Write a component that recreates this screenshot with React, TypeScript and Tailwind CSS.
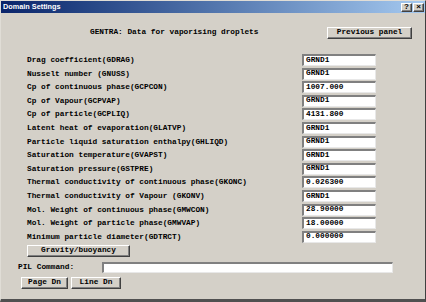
const rows: [string, string][] = [
  ['Drag coefficient(GDRAG)', 'GRND1'],
  ['Nusselt number (GNUSS)', 'GRND1'],
  ['Cp of continuous phase(GCPCON)', '1007.000'],
  ['Cp of Vapour(GCPVAP)', 'GRND1'],
  ['Cp of particle(GCPLIQ)', '4131.800'],
  ['Latent heat of evaporation(GLATVP)', 'GRND1'],
  ['Particle liquid saturation enthalpy(GHLIQD)', 'GRND1'],
  ['Saturation temperature(GVAPST)', 'GRND1'],
  ['Saturation pressure(GSTPRE)', 'GRND1'],
  ['Thermal conductivity of continuous phase(GKONC)', '0.026300'],
  ['Thermal conductivity of Vapour (GKONV)', 'GRND1'],
  ['Mol. Weight of continuous phase(GMWCON)', '28.90000'],
  ['Mol. Weight of particle phase(GMWVAP)', '18.00000'],
  ['Minimum particle diameter(GDTRCT)', '0.000000'],
];

// raised classic button
const btn =
  'flex items-center justify-center bg-[#d4d0c8] border border-t-white border-l-white border-r-[#404040] border-b-[#404040] shadow-[inset_-1px_-1px_0_#808080] leading-none';

// sunken text box
const field =
  'bg-white border-t-2 border-l-2 border-t-[#808080] border-l-[#808080] border-r border-b border-r-[#e8e8e8] border-b-[#e8e8e8] flex items-center pl-[2px] leading-none';

export default function App() {
  return (
    <div
      className="w-[426px] h-[302px] bg-[#d4d0c8] flex flex-col border border-t-[#e0ddd6] border-l-[#e0ddd6] border-r-[#404040] border-b-[3px] border-b-[#505050] text-black text-[7.8px] font-bold"
      style={{ fontFamily: '"Liberation Mono", "Courier New", monospace' }}
    >
      {/* Title bar */}
      <div className="h-[12px] flex items-center justify-between bg-gradient-to-r from-[#0a246a] to-[#a6caf0] pl-[2px] pr-[1px]">
        <span
          className="text-white text-[7.3px] font-bold leading-none"
          style={{ fontFamily: '"Liberation Sans", Arial, sans-serif' }}
        >
          Domain Settings
        </span>
        <div className="flex gap-[1px]">
          <div className={`${btn} w-[11px] h-[9px] text-[8px]`} style={{ fontFamily: '"Liberation Sans", Arial, sans-serif' }}>?</div>
          <div className={`${btn} w-[11px] h-[9px] text-[8px]`} style={{ fontFamily: '"Liberation Sans", Arial, sans-serif' }}>×</div>
        </div>
      </div>

      {/* Header */}
      <div className="mt-[14px] h-[12px] flex items-center pl-[89px] pr-[13px]">
        <span className="leading-none">GENTRA: Data for vaporising droplets</span>
        <div className={`${btn} ml-auto w-[85px] h-[12px]`}>Previous panel</div>
      </div>

      {/* Parameter rows */}
      <div className="mt-[15px] flex flex-col">
        {rows.map(([label, value]) => (
          <div key={label} className="h-[13.6px] flex items-start">
            <span className="pl-[26px] w-[301px] leading-[12px] whitespace-nowrap">{label}</span>
            <div className={`${field} w-[74px] h-[12px]`}>{value}</div>
          </div>
        ))}
      </div>

      <div className="mt-[1px] pl-[26px]">
        <div className={`${btn} w-[103px] h-[12px]`}>Gravity/buoyancy</div>
      </div>

      <div className="mt-[5px] h-[11px] flex items-center pl-[17px]">
        <span className="w-[84px] leading-none">PIL Command:</span>
        <div className={`${field} w-[291px] h-[11px]`} />
      </div>

      <div className="mt-[4px] flex gap-[3px] pl-[20px]">
        <div className={`${btn} w-[47px] h-[12px]`}>Page Dn</div>
        <div className={`${btn} w-[50px] h-[12px]`}>Line Dn</div>
      </div>
    </div>
  );
}
